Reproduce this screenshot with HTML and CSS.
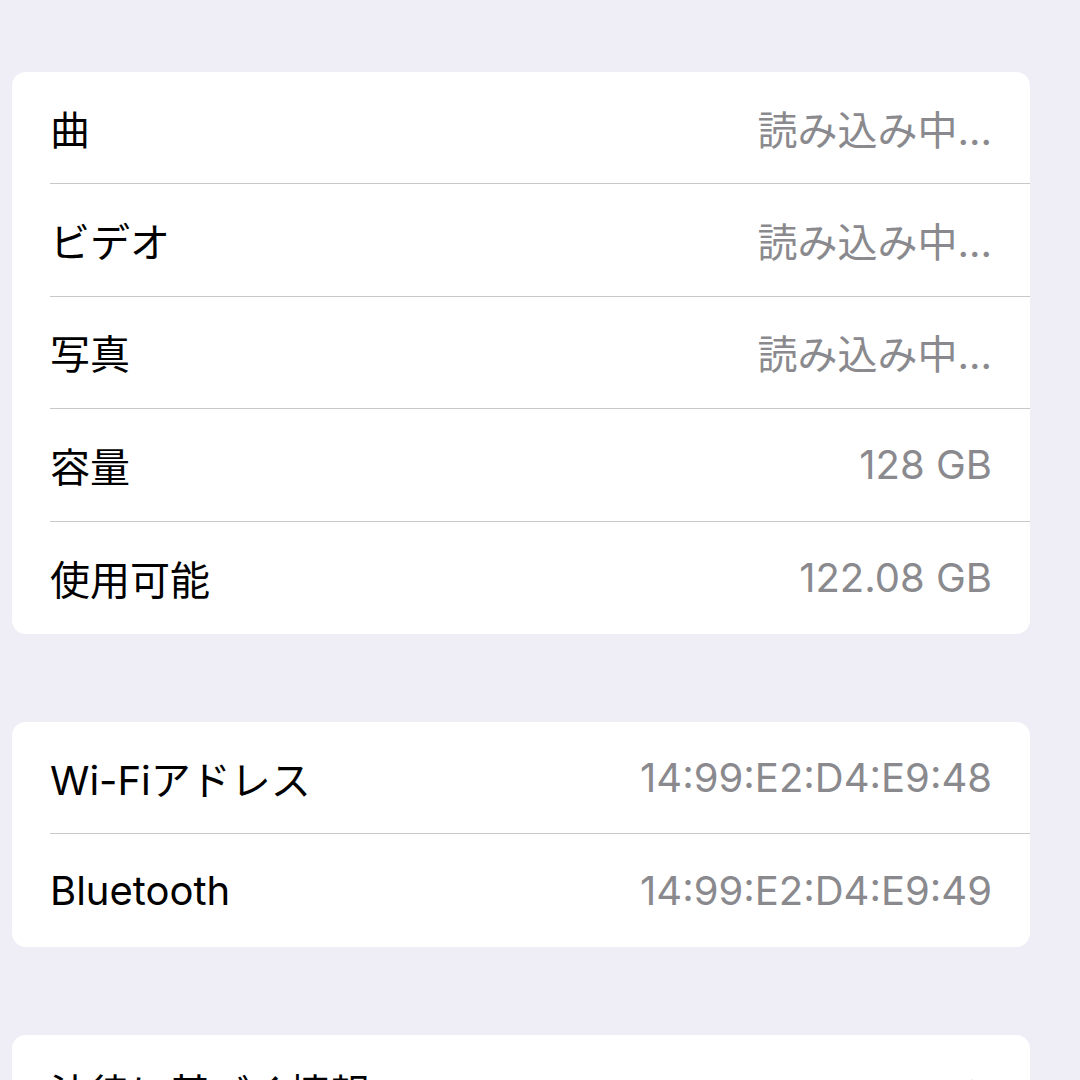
FILE: index.html
```html
<!doctype html>
<html>
<head>
   <title>情報</title>
   <meta charset="utf-8">
   <meta name="viewport" content="width=device-width, initial-scale=1.0">
   <link rel="stylesheet" href="styles.css">
</head>
<body>

   <div class="wrap">

      <div class="group">
         <div class="row"><span class="label">曲</span><span class="value">読み込み中...</span></div>
         <div class="row"><span class="label">ビデオ</span><span class="value">読み込み中...</span></div>
         <div class="row"><span class="label">写真</span><span class="value">読み込み中...</span></div>
         <div class="row"><span class="label">容量</span><span class="value">128 GB</span></div>
         <div class="row"><span class="label">使用可能</span><span class="value">122.08 GB</span></div>
      </div>

      <div class="group">
         <div class="row"><span class="label">Wi-Fiアドレス</span><span class="value">14:99:E2:D4:E9:48</span></div>
         <div class="row"><span class="label">Bluetooth</span><span class="value">14:99:E2:D4:E9:49</span></div>
      </div>

      <div class="group">
         <div class="row">
            <span class="label">法律に基づく情報</span>
            <svg class="chevron" width="14" height="24" viewBox="0 0 14 24"><path d="M2 2 L12 12 L2 22" fill="none" stroke="#c4c4c7" stroke-width="3" stroke-linecap="round" stroke-linejoin="round"/></svg>
         </div>
      </div>

   </div>

</body>
</html>
```

FILE: styles.css
```css
body{
   margin: 0;
   background: #efeef6;
   font-family: Inter, "Noto Sans CJK JP", sans-serif;
   color: #000;
}

.wrap{
   padding: 72px 50px 0 12px;
   display: flex;
   flex-direction: column;
   gap: 88px;
}

.group{
   background: #fff;
   border-radius: 14px;
   overflow: hidden;
}

.row{
   margin-left: 38px;
   padding-right: 38px;
   height: 111.4px;
   border-bottom: 1px solid #c8c8cb;
   display: flex;
   align-items: center;
   justify-content: space-between;
   font-size: 40px;
}

.row:last-child{
   border-bottom: none;
   height: 112.4px;
}

.label{
   color: #000;
}

.value{
   color: #8a8a8e;
}

.chevron{
   margin-right: 8px;
}
```
